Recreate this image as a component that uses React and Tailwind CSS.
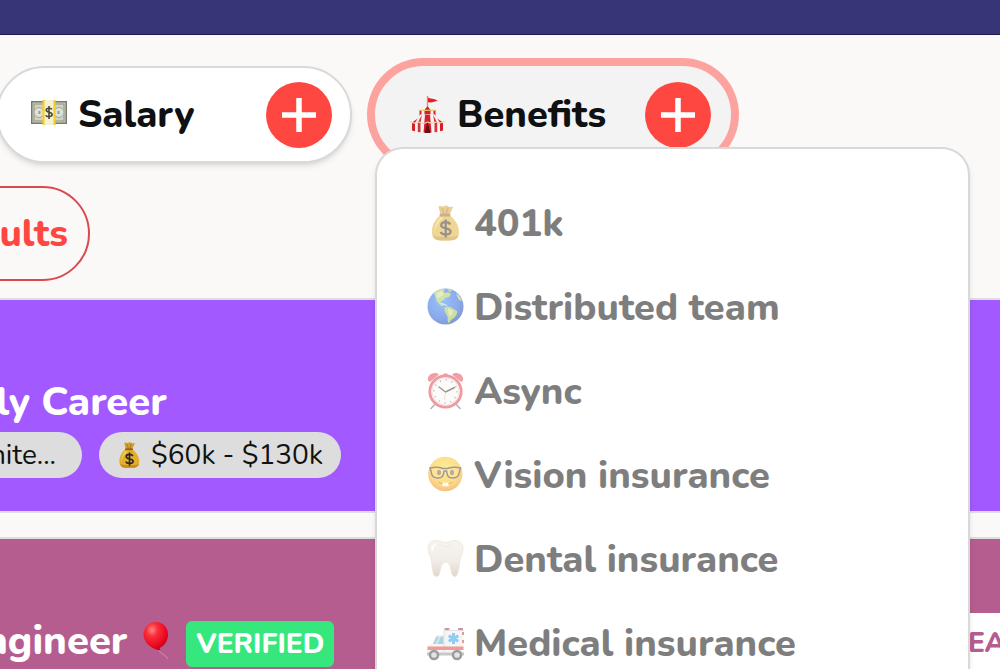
// ── Icons ─────────────────────────────────────────────────────────────────────
function Banknote({ className }) {
  return (
    <svg viewBox="0 0 38 38" className={className} aria-hidden="true">
      <rect x="1" y="5" width="36" height="23" fill="#77786f" />
      <rect x="2.5" y="6.5" width="33" height="20" fill="#d3d3c3" />
      <rect x="4" y="8" width="30" height="17" fill="none" stroke="#90917f" strokeWidth="1" />
      <circle cx="9" cy="16.500" r="5" fill="#dfe1d3" stroke="#a5a898" />
      <circle cx="29" cy="16.500" r="5" fill="#d3e4d8" stroke="#a5a898" />
      <path d="M9.500 15v3M28.500 15v3" stroke="#8e9a90" strokeWidth="1.800" />
      <rect x="13" y="4" width="12" height="25" fill="#f5f1d5" />
      <path d="M13.500 4v25M24.500 4v25" stroke="#f3cf2b" strokeWidth="2.200" />
      <path d="M22 13.300c-.7-1.400-5.800-1.800-5.800.8 0 2.800 5.900 1.600 5.900 4.500 0 2.700-5.500 2.500-6.300.6M19 10v13" fill="none" stroke="#4a4532" strokeWidth="1.600" />
    </svg>
  )
}

function Circus({ className }) {
  return (
    <svg viewBox="0 0 38 38" className={className} aria-hidden="true">
      <path d="M18.500 0v12" stroke="#c9a03c" strokeWidth="1.300" />
      <path d="M19 1.500c3 2 5 0 10 3.500-4 .2-6 2.500-10 1z" fill="#e4202c" />
      <path d="M18.500 10c-2 3-5 3.500-8 4v8h16v-8c-3-.5-6-1-8-4z" fill="#f4f1ef" />
      <path d="M18.500 10l-3 4v8h6v-8zM10.500 14h2v8h-2zM24.500 14h2v8h-2z" fill="#d61f2b" />
      <path d="M10 14.300h17" stroke="#e8c56c" strokeWidth="1.200" />
      <path d="M11 18.500c-2 4-5 5.500-10 6.500l2 2v8c8 2.500 23 2.500 31 0v-8l2-2c-5-1-8-2.500-10-6.500z" fill="#f7f3f1" />
      <path d="M16 19l-1.500 17.500h8L21 19zM11 19c-1.500 3-3.500 5-6 6l-2 2v7.500l3 .8v-8.500zM26 19c1.500 3 3.500 5 6 6l2 2v7.500l-3 .8v-8.500z" fill="#d61f2b" />
      <path d="M12.800 19l-4 7.500v9.400l2.700.4v-9zM24.200 19l4 7.500v9.400l-2.700.4v-9z" fill="#d8323c" />
      <path d="M1 25.500c4 2.500 7 1.500 9 .5 3 2 6 1.500 8.500 0 3 1.500 5 2 8.500 0 3 1.500 5 1.500 9-.5" fill="none" stroke="#ecd0b0" strokeWidth="1.200" />
      <path d="M18.500 26l-3 11h6z" fill="#671018" />
    </svg>
  )
}

function MoneyBag({ className }) {
  return (
    <svg viewBox="0 0 38 38" className={className} aria-hidden="true">
      <path d="M12.500 2.500c2-1.500 3.500 1 5 0s3-1.500 5 0 3-.5 4.500.5L23.500 11h-9z" fill="#d69f2d" />
      <path d="M16 4l2 6M22 4l-2 6" stroke="#a87313" strokeWidth="1.200" />
      <path d="M14 11.500C8.500 16 5.500 22 6 29c.4 5 2.500 7 6.500 7.300 4 .3 9 .3 13.500 0 4-.3 6.500-2.300 6.900-7.300C33.300 22 29.500 16 24 11.500z" fill="#e2ae2b" />
      <path d="M14.500 13.500C10 18 8.500 23 8.500 28c1.500-6 4-11 9-14z" fill="#f7d45a" />
      <path d="M7 31c1 3.500 3 5 6 5.200 4 .3 9 .3 13 0 3.500-.3 5.500-2 6.500-5-4 2.500-22 2.500-25.500-.2z" fill="#c78a1a" />
      <rect x="13.500" y="9.800" width="11" height="2.600" rx="1.300" fill="#9c641a" />
      <path d="M24.200 20.500c-1.200-3.200-9-3.300-9 .7 0 4.300 9.400 2.200 9.400 6.400 0 4-8.600 3.900-9.900.3M19.700 15.500v18" fill="none" stroke="#2c2620" strokeWidth="2.200" />
    </svg>
  )
}

function Globe({ className }) {
  return (
    <svg viewBox="0 0 38 38" className={className} aria-hidden="true">
      <defs>
        <radialGradient id="sea" cx="40%" cy="35%" r="65%">
          <stop offset="0" stopColor="#3486f5" />
          <stop offset=".7" stopColor="#1a58dc" />
          <stop offset="1" stopColor="#0a3bb0" />
        </radialGradient>
      </defs>
      <circle cx="19.500" cy="18.500" r="18" fill="url(#sea)" />
      <path d="M8 5c3-2.500 6-4 9-4l2 1-2 2 3 1 2-1 3 2-2 3-4 1-1 2-2 .5-1.500 2 1.500 2 2 1-1 1-3-1.500-3-3.500-2-5z" fill="#a3c95c" />
      <path d="M11 5l5-2 2 3-4 3-3 1z" fill="#dbd98b" />
      <path d="M18.500 19.500c3-2 6-.5 7.500.5l5 3c1 2-1 4-2 6l-4 3-2 3c-2-1-1-4-1.500-6C20.500 26 17.500 23 18.500 19.500z" fill="#94c24a" />
      <path d="M22 20l5 2.500-1 4-3 2z" fill="#d3d67b" />
      <path d="M30 5c3 2 5 5 6 8l-3-1-2-4zM21 1l5 1-2 2z" fill="#a3c95c" />
      <path d="M15 15.500l4 1 2 1.500" stroke="#e8f1ff" fill="none" />
    </svg>
  )
}

function AlarmClock({ className }) {
  return (
    <svg viewBox="0 0 38 38" className={className} aria-hidden="true">
      <path d="M10 31l-5 5.500M29 31l5 5.500" stroke="#6e6e70" strokeWidth="1.600" strokeLinecap="round" />
      <path d="M2 8C1 3 8-1.500 13 2.500L4.500 9.500C3.500 10 2.300 9.500 2 8zM37 8c1-5-6-9.500-11-5.500l8.500 7c1 .5 2.200 0 2.500-1.500z" fill="#e5414d" />
      <path d="M17.500 1.500h4v3h-4z" fill="#e5414d" />
      <circle cx="19.500" cy="19.500" r="15.700" fill="#fbf9f4" stroke="#dc3a47" strokeWidth="2.800" />
      <circle cx="19.500" cy="19.500" r="13.600" fill="none" stroke="#f2b6b5" strokeWidth=".8" />
      <circle cx="19.500" cy="19.500" r="11.500" fill="none" stroke="#6b6b6b" strokeWidth="2" strokeDasharray=".8 5.220" />
      <path d="M13 15l6.500 5 9-4.500" fill="none" stroke="#333" strokeWidth="1.400" strokeLinecap="round" strokeLinejoin="round" />
      <path d="M19.500 20l-1 8" stroke="#d59d40" strokeWidth=".6" />
    </svg>
  )
}

function NerdFace({ className }) {
  return (
    <svg viewBox="0 0 38 38" className={className} aria-hidden="true">
      <defs>
        <radialGradient id="face" cx="50%" cy="35%" r="65%">
          <stop offset="0" stopColor="#ffdf2e" />
          <stop offset=".7" stopColor="#fbb814" />
          <stop offset="1" stopColor="#e8820a" />
        </radialGradient>
      </defs>
      <circle cx="19.300" cy="18" r="17.200" fill="url(#face)" />
      <ellipse cx="13" cy="16.500" rx="2" ry="2.800" fill="#6b4417" />
      <ellipse cx="26" cy="16.500" rx="2" ry="2.800" fill="#6b4417" />
      <path d="M4 12c4.500-1.200 9-1 13 .5h4.600c4-1.500 8.500-1.700 13-.5l-1 3c-.6 5.500-2.500 7-7 7-4 0-5.500-1.500-6-7h-2.600c-.5 5.500-2 7-6 7-4.500 0-6.400-1.500-7-7z" fill="#fff" fillOpacity=".1" stroke="#3e3534" strokeWidth="1.500" strokeLinejoin="round" />
      <path d="M12 25.500c4 2.500 11 2.500 15 0-2 3.500-13 3.500-15 0z" fill="#8a4f1c" />
      <path d="M16.500 26.800h6v3.400h-6z" fill="#fff" />
      <path d="M19.500 27v3.200" stroke="#d9d4cc" strokeWidth=".6" />
    </svg>
  )
}

function Tooth({ className }) {
  return (
    <svg viewBox="0 0 38 38" className={className} aria-hidden="true">
      <defs>
        <linearGradient id="enamel" x1="0" y1="0" x2="0" y2="1">
          <stop offset="0" stopColor="#f0ebe3" />
          <stop offset=".6" stopColor="#e3d9ce" />
          <stop offset="1" stopColor="#c6ae98" />
        </linearGradient>
      </defs>
      <path d="M2 8C2 3 6 0 11 .5c3.500.4 5 2 8.500 2S25 .3 29 .5C34 .8 37 4 37 8.500c0 5-2.800 8-3.300 13-.5 6-1.700 14.500-4.500 15-3 .5-3.700-4-4.400-7.500-.7-3.700-2.300-7-5-7s-4.500 3-5.300 7c-.7 3.500-1.200 8-4.300 7.500-3.500-.6-4-8-4.500-14C5.300 17 2 13 2 8z" fill="url(#enamel)" stroke="#d8c8b9" strokeWidth=".7" />
      <path d="M5 9c0-3.500 3-5.500 6-5-3 1-4 4-3 8z" fill="#fff" />
      <path d="M13 4c3 2.500 8 3 12 1" fill="none" stroke="#d9cdc0" strokeWidth=".8" />
    </svg>
  )
}

function Ambulance({ className }) {
  return (
    <svg viewBox="0 0 38 38" className={className} aria-hidden="true">
      <path d="M18.500 4h5v3h-5zM32 4h5v3h-5z" fill="#bb3b48" />
      <path d="M20.500 4H22v3h-1.500zM34 4h1.500v3H34z" fill="#33405e" />
      <path d="M18 6.500h19.500V30H1v-7l5-3.500L10 11h8z" fill="#eceded" />
      <path d="M18 6.500h19.500" stroke="#c3c5c8" strokeWidth=".8" />
      <path d="M10.500 12.500h7V20H7z" fill="#5aa7c4" />
      <path d="M13 12.500h2L11.500 20h-2z" fill="#a7d9e8" />
      <path d="M18 7v21" stroke="#b9babd" strokeWidth=".8" />
      <path d="M1.500 22.500h36v3.500h-36z" fill="#e2392f" />
      <path d="M37 8v3M37 16v3" stroke="#c43b40" strokeWidth="2" />
      <path d="M27.500 9v11M22.700 11.700l9.600 5.600M32.300 11.700l-9.600 5.600" stroke="#1f9be6" strokeWidth="3" />
      <path d="M1 28.500h37v3H1z" fill="#8f9297" />
      <circle cx="8" cy="31" r="5.300" fill="#3b3c40" />
      <circle cx="8" cy="31" r="2.800" fill="#c9cacc" />
      <circle cx="31" cy="31" r="5.300" fill="#3b3c40" />
      <circle cx="31" cy="31" r="2.800" fill="#c9cacc" />
    </svg>
  )
}

function Balloon({ className }) {
  return (
    <svg viewBox="0 0 28 40" className={className} aria-hidden="true">
      <defs>
        <radialGradient id="balloon" cx="35%" cy="28%" r="75%">
          <stop offset="0" stopColor="#ff8a80" />
          <stop offset=".3" stopColor="#fb2f3c" />
          <stop offset=".8" stopColor="#e8041c" />
          <stop offset="1" stopColor="#b80016" />
        </radialGradient>
      </defs>
      <path d="M17 29c0 3 6 4 9 9" fill="none" stroke="#c9839f" strokeWidth="1.200" />
      <path d="M14 1c7 0 12 5.500 12 12.500 0 7-4.500 12-8.500 13.500l1 2.500-4-1c-6-1.500-13-7.500-13-15C1.500 6.500 7 1 14 1z" fill="url(#balloon)" />
    </svg>
  )
}

// ── Filters ───────────────────────────────────────────────────────────────────
function PlusBadge() {
  return (
    <span className="ml-auto flex size-[66px] shrink-0 items-center justify-center rounded-full bg-[#ff4742]">
      <svg viewBox="0 0 34 34" className="size-[34px]" aria-hidden="true">
        <path d="M17 0v34M0 17h34" stroke="#fff" strokeWidth="5.500" />
      </svg>
    </span>
  )
}

function FilterButton({ icon: Icon, label, open }) {
  return (
    <button
      type="button"
      aria-expanded={open}
      className={
        'flex h-[97px] w-[356px] shrink-0 items-center gap-2.5 rounded-full border-2 pr-[18px] pl-8 text-[38px] font-extrabold text-[#0e1012] ' +
        (open
          ? 'border-[#f3f3f3] bg-[#f3f3f3] ring-8 ring-[#fca39f]'
          : 'border-[#d9d9d9] bg-white shadow-md')
      }
    >
      <Icon className="size-[38px]" />
      {label}
      <PlusBadge />
    </button>
  )
}

const BENEFITS = [
  { icon: MoneyBag, label: '401k' },
  { icon: Globe, label: 'Distributed team' },
  { icon: AlarmClock, label: 'Async' },
  { icon: NerdFace, label: 'Vision insurance' },
  { icon: Tooth, label: 'Dental insurance' },
  { icon: Ambulance, label: 'Medical insurance' },
]

function BenefitsMenu() {
  return (
    <ul className="absolute top-[81px] left-0 z-10 w-[595px] rounded-t-[28px] border-2 border-b-0 border-[#d9d9d9] bg-white px-[49px] py-8 shadow-md">
      {BENEFITS.map(({ icon: Icon, label }) => (
        <li key={label}>
          <button type="button" className="flex h-[84px] w-full items-center gap-2.5 text-[38px] font-extrabold text-black opacity-50">
            <Icon className="size-[38px] shrink-0" />
            {label}
          </button>
        </li>
      ))}
    </ul>
  )
}

// ── Jobs ──────────────────────────────────────────────────────────────────────
function EarlyCareerJob() {
  return (
    <article className="h-[215px] border-y-2 border-[#dddddd] bg-[#a259ff] pt-[76px] text-white">
      <h2 className="-ml-1 text-[40px] leading-[52px] font-extrabold">ly Career</h2>
      <div className="mt-1 flex gap-[17px] text-[28px] text-[#111111]">
        <span className="-ml-10 flex h-[46px] w-[122px] items-center justify-end rounded-full bg-[#dddddd] pr-[26px]">nite...</span>
        <span className="flex h-[46px] items-center gap-2 rounded-full bg-[#dddddd] pr-[18px] pl-4">
          <MoneyBag className="size-7" />
          $60k - $130k
        </span>
      </div>
    </article>
  )
}

function EngineerJob() {
  return (
    <article className="flex h-[240px] items-start justify-between border-t-2 border-[#dddddd] bg-[#b55d8f] text-white">
      <div className="mt-[82px] flex items-start">
        <h2 className="-ml-4 text-[40px] leading-[40px] font-extrabold">ngineer</h2>
        <Balloon className="ml-[15px] h-10 w-7" />
        <span className="ml-4 flex h-[46px] items-center rounded-md bg-[#36e77d] px-2.5 text-[28px] font-extrabold">VERIFIED</span>
      </div>
      <a href="#apply" className="mt-[74px] flex h-[166px] w-16 items-start bg-white pt-2 pl-8 text-[28px] leading-[44px] font-extrabold text-[#b55d8f]">
        EA
      </a>
    </article>
  )
}

// ── App ───────────────────────────────────────────────────────────────────────
export default function App() {
  return (
    <div className="h-screen overflow-hidden bg-[#fbf9f8] font-['Nunito','Lato',sans-serif]">
      <header className="h-[35px] border-b border-[#1f1b50] bg-[#373577]" />
      <main>
        <div className="-ml-1 flex gap-[23px] pt-[31px]">
          <FilterButton icon={Banknote} label="Salary" />
          <div className="relative">
            <FilterButton icon={Circus} label="Benefits" open />
            <BenefitsMenu />
          </div>
        </div>
        <button
          type="button"
          className="mt-[23px] -ml-12 flex h-[95px] w-[138px] items-center justify-end rounded-full border-2 border-[#d94a50] pr-5 text-[38px] font-extrabold text-[#ff4742]"
        >
          ults
        </button>
        <section className="mt-[17px] flex flex-col gap-6">
          <EarlyCareerJob />
          <EngineerJob />
        </section>
      </main>
    </div>
  )
}
